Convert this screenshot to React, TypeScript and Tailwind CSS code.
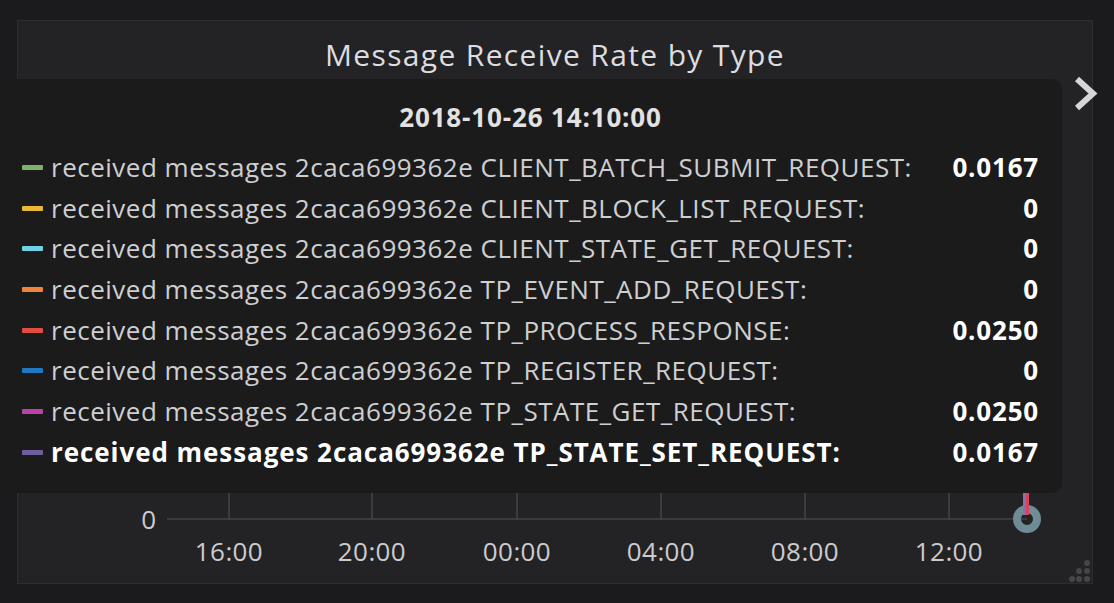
const series = [
  { color: "bg-[#7eb26d]", name: "CLIENT_BATCH_SUBMIT_REQUEST", value: "0.0167" },
  { color: "bg-[#eab839]", name: "CLIENT_BLOCK_LIST_REQUEST", value: "0" },
  { color: "bg-[#6ed0e0]", name: "CLIENT_STATE_GET_REQUEST", value: "0" },
  { color: "bg-[#ef843c]", name: "TP_EVENT_ADD_REQUEST", value: "0" },
  { color: "bg-[#e24d42]", name: "TP_PROCESS_RESPONSE", value: "0.0250" },
  { color: "bg-[#1f78c1]", name: "TP_REGISTER_REQUEST", value: "0" },
  { color: "bg-[#ba43a9]", name: "TP_STATE_GET_REQUEST", value: "0.0250" },
  { color: "bg-[#705da0]", name: "TP_STATE_SET_REQUEST", value: "0.0167", active: true },
];

const ticks = [
  { x: 229, label: "16:00" },
  { x: 372, label: "20:00" },
  { x: 517, label: "00:00" },
  { x: 661, label: "04:00" },
  { x: 805, label: "08:00" },
  { x: 949, label: "12:00" },
];

function Graph() {
  return (
    <svg className="block h-[503px] w-[1074px]" viewBox="18 79 1074 503">
      {ticks.map((t) => (
        <line key={t.x} x1={t.x} y1={90} x2={t.x} y2={519} stroke="#444447" strokeWidth={1.5} />
      ))}
      <line x1={167} y1={519} x2={1027} y2={519} stroke="#444447" strokeWidth={1.5} />
      <text x={156} y={529} textAnchor="end" fill="#cbcccf" fontSize={26} fontFamily="'Open Sans', sans-serif">
        0
      </text>
      {ticks.map((t) => (
        <text
          key={t.label}
          x={t.x}
          y={561}
          textAnchor="middle"
          fill="#cbcccf"
          fontSize={26}
          letterSpacing={0.4}
          fontFamily="'Open Sans', sans-serif"
        >
          {t.label}
        </text>
      ))}
      <circle cx={1027} cy={519} r={10} fill="none" stroke="#6f8b96" strokeWidth={8} />
      <line x1={1024.5} y1={493} x2={1024.5} y2={515} stroke="#8a6fb0" strokeWidth={3} />
      <line x1={1027.5} y1={493} x2={1027.5} y2={515} stroke="#d9435a" strokeWidth={3} />
      {[
        [1087, 563],
        [1079, 571],
        [1087, 571],
        [1072, 579],
        [1079, 579],
        [1087, 579],
      ].map(([cx, cy]) => (
        <circle key={`${cx}-${cy}`} cx={cx} cy={cy} r={3} fill="#46464a" />
      ))}
    </svg>
  );
}

function Tooltip() {
  return (
    <div className="absolute left-0 top-[79px] h-[414px] w-[1062px] rounded-r-[10px] bg-[#1b1b1c] pl-[22px] pr-[23px] pt-[18px] text-[26px]">
      <div className="text-center font-bold leading-[40px] tracking-[0.85px] text-[#e2e2e3]">2018-10-26 14:10:00</div>
      <div className="mt-[10px]">
        {series.map((s) => (
          <div key={s.name} className="flex h-[40.7px] items-center justify-between leading-[40.7px]">
            <div
              className={`flex items-center ${
                s.active ? "font-bold tracking-[0.93px] text-white" : "tracking-[0.5px] text-[#cecfd1]"
              }`}
            >
              <span className={`mr-[8px] inline-block h-[5px] w-[21px] rounded-[1px] ${s.color}`} />
              <span>received messages 2caca699362e {s.name}:</span>
            </div>
            <span className="font-bold tracking-[0.8px] text-white">{s.value}</span>
          </div>
        ))}
      </div>
    </div>
  );
}

export default function App() {
  return (
    <div className="relative h-[603px] w-[1114px] overflow-hidden bg-[#1b1b1d] font-['Open_Sans',sans-serif]">
      <div className="ml-[17px] mt-[20px] h-[564px] w-[1076px] border border-[#2e2e31] bg-[#232325]">
        <div className="h-[58px] pt-[14px] text-center text-[30px] font-medium leading-[40px] tracking-[1.35px] text-[#dcdde0]">
          Message Receive Rate by Type
        </div>
        <Graph />
      </div>
      <Tooltip />
      <svg className="absolute left-[1072px] top-[74px] h-[40px] w-[30px]" viewBox="0 0 30 40">
        <polyline points="5,5 21,19.5 5,34" fill="none" stroke="#d6d6d8" strokeWidth={6} />
      </svg>
    </div>
  );
}
